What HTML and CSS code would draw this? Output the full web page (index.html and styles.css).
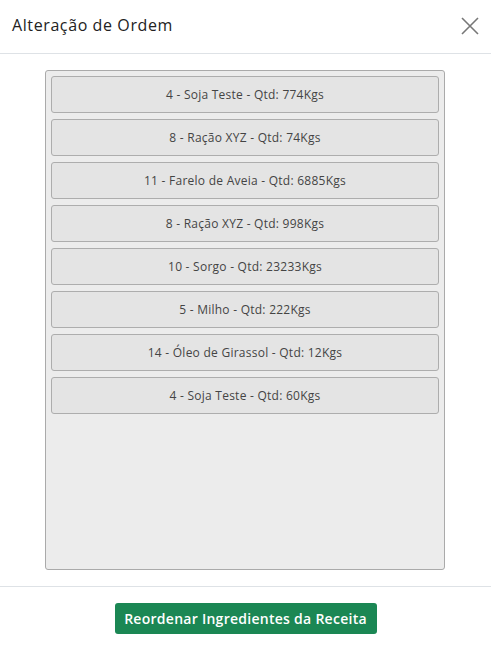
FILE: index.html
```html
<!DOCTYPE html>
<html lang="pt">
<head>
<meta charset="utf-8">
<link rel="stylesheet" href="styles.css">
</head>
<body>
<div class="modal">
  <header class="modal-header">
    <h1 class="modal-title">Alteração de Ordem</h1>
    <button class="close" aria-label="Fechar">
      <svg width="18" height="18" viewBox="0 0 18 18"><path d="M1 1 L17 17 M17 1 L1 17" stroke="#777" stroke-width="1.6" fill="none"/></svg>
    </button>
  </header>
  <main class="modal-body">
    <ul class="list">
      <li class="item">4 - Soja Teste - Qtd: 774Kgs</li>
      <li class="item">8 - Ração XYZ - Qtd: 74Kgs</li>
      <li class="item">11 - Farelo de Aveia - Qtd: 6885Kgs</li>
      <li class="item">8 - Ração XYZ - Qtd: 998Kgs</li>
      <li class="item">10 - Sorgo - Qtd: 23233Kgs</li>
      <li class="item">5 - Milho - Qtd: 222Kgs</li>
      <li class="item">14 - Óleo de Girassol - Qtd: 12Kgs</li>
      <li class="item">4 - Soja Teste - Qtd: 60Kgs</li>
    </ul>
  </main>
  <footer class="modal-footer">
    <button class="btn">Reordenar Ingredientes da Receita</button>
  </footer>
</div>
</body>
</html>
```
FILE: styles.css
```css
* { box-sizing: border-box; }
html, body { margin: 0; padding: 0; background: #fff; }
body { font-family: "Open Sans", "Liberation Sans", sans-serif; color: #333; }
.modal { width: 491px; height: 647px; display: flex; flex-direction: column; }
.modal-header {
  height: 54px;
  border-bottom: 1px solid #dee2e6;
  display: flex;
  align-items: center;
  justify-content: space-between;
  padding: 0 12px 4px 12px;
}
.modal-title { margin: 0; font-size: 16px; font-weight: 400; color: #222; letter-spacing: 0.6px; }
.close { background: none; border: 0; padding: 0; width: 18px; height: 18px; display: flex; margin-top: 2px; }
.modal-body { padding: 16px 0 16px 45px; display: flex; }
.list {
  list-style: none;
  margin: 0;
  width: 400px;
  height: 500px;
  padding: 5px;
  background: #ececec;
  border: 1px solid #aaa;
  border-radius: 3px;
  display: flex;
  flex-direction: column;
  gap: 6px;
}
.item {
  height: 37px;
  background: #e4e4e4;
  border: 1px solid #adadad;
  border-radius: 3px;
  display: flex;
  align-items: center;
  justify-content: center;
  font-size: 12px;
  letter-spacing: 0.25px;
  color: #444;
}
.modal-footer {
  border-top: 1px solid #dee2e6;
  flex: 1;
  display: flex;
  justify-content: center;
  padding-top: 16px;
}
.btn {
  height: 31px;
  width: 262px;
  background: #1b8754;
  color: #fff;
  border: 0;
  border-radius: 3px;
  font-family: "Open Sans", "Liberation Sans", sans-serif;
  font-size: 14px;
  font-weight: 600;
  letter-spacing: 0.27px;
  padding: 0;
}
```
